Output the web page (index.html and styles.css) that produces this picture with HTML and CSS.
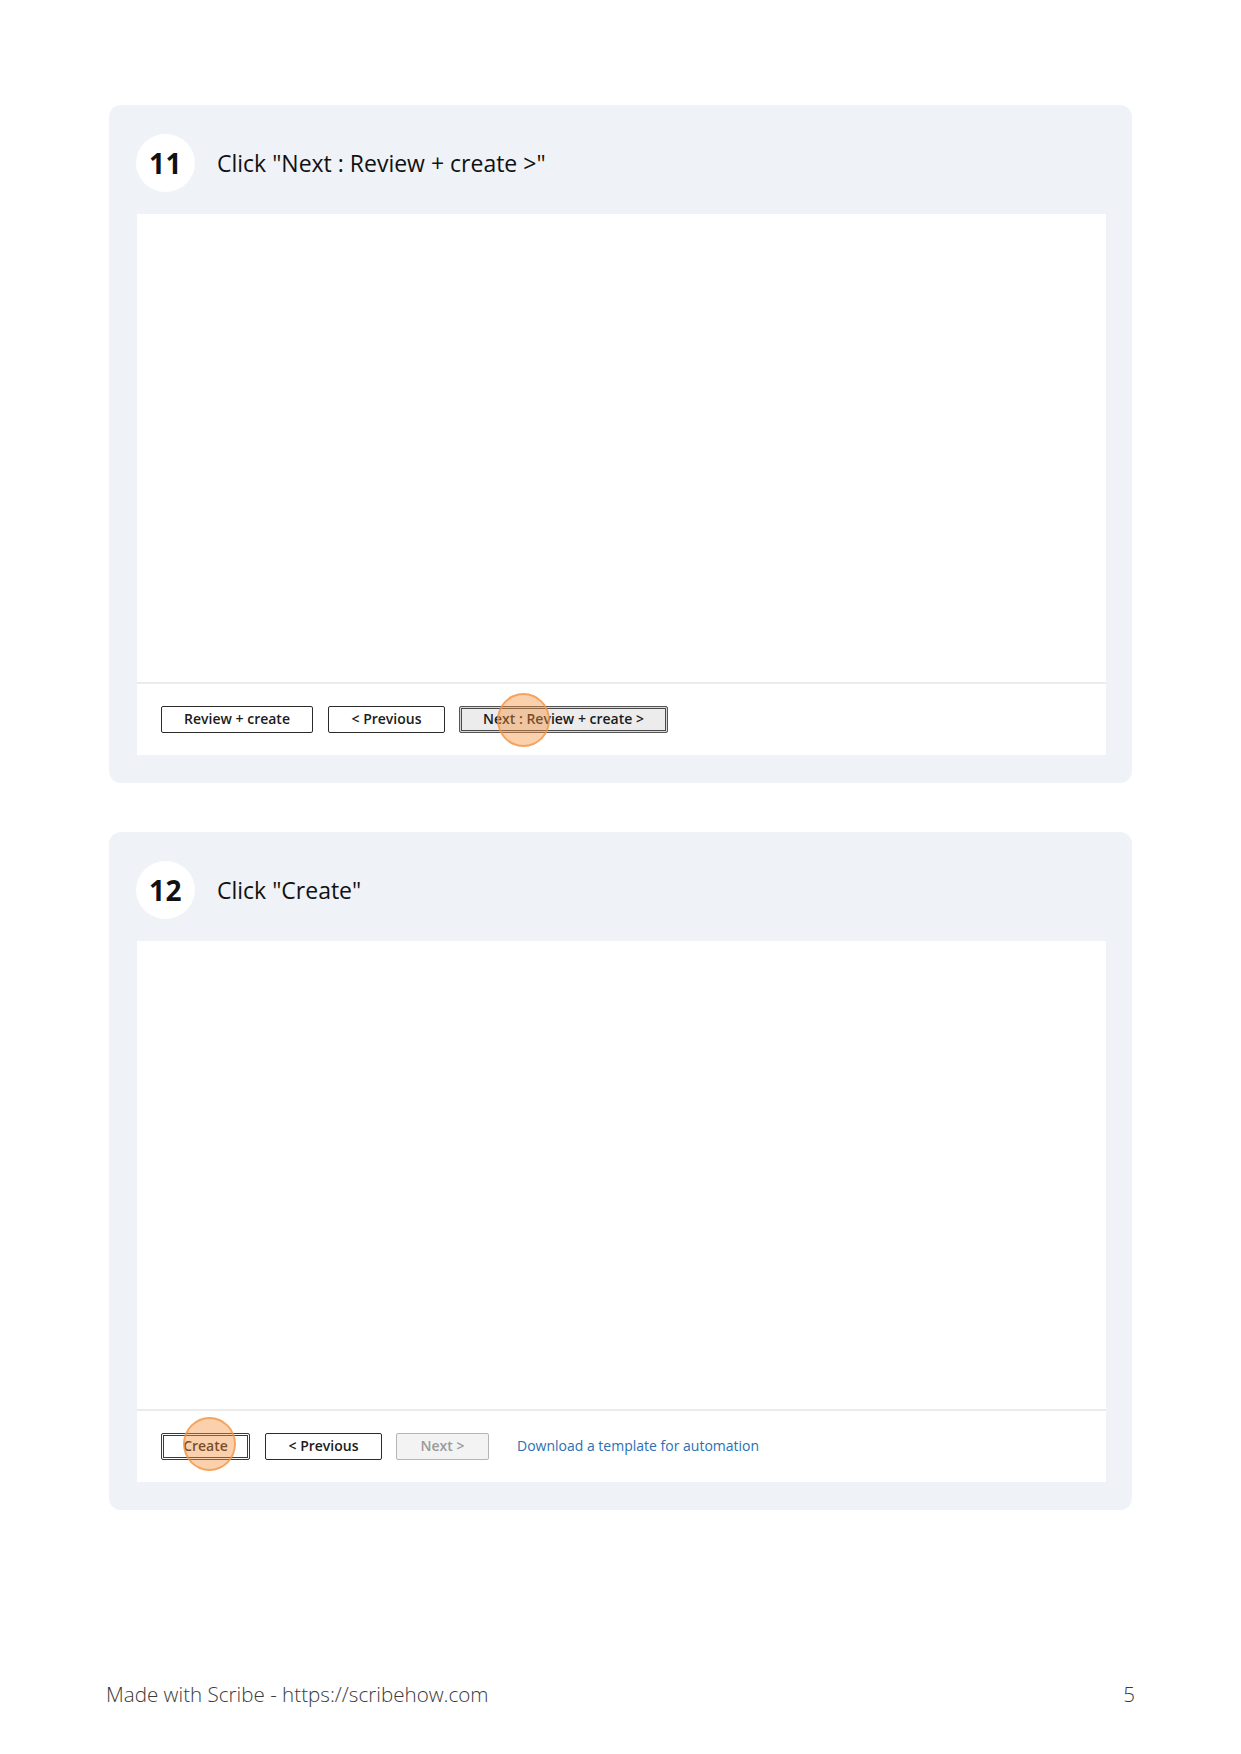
FILE: index.html
```html
<!DOCTYPE html>
<html lang="en">
<head>
<meta charset="utf-8">
<title>Made with Scribe</title>
<link rel="stylesheet" href="styles.css">
</head>
<body>
<main class="page">
  <section class="step">
    <header class="step-head">
      <div class="step-num">11</div>
      <h2 class="step-title">Click "Next : Review + create &gt;"</h2>
    </header>
    <div class="shot">
      <div class="shot-blank"></div>
      <div class="shot-bar">
        <button class="btn w152">Review + create</button>
        <button class="btn w117">&lt; Previous</button>
        <button class="btn btn-focus btn-grey w209">Next : Review + create &gt;<span class="click click-a"></span></button>
      </div>
    </div>
  </section>

  <section class="step">
    <header class="step-head">
      <div class="step-num">12</div>
      <h2 class="step-title">Click "Create"</h2>
    </header>
    <div class="shot">
      <div class="shot-blank"></div>
      <div class="shot-bar">
        <button class="btn btn-focus w89">Create<span class="click click-b"></span></button>
        <button class="btn w117">&lt; Previous</button>
        <button class="btn btn-disabled w93">Next &gt;</button>
        <span class="link">Download a template for automation</span>
      </div>
    </div>
  </section>
</main>
<footer class="foot">
  <span>Made with Scribe - https://scribehow.com</span>
  <span>5</span>
</footer>
</body>
</html>
```

FILE: styles.css
```css
* { box-sizing: border-box; }

html, body {
  margin: 0;
  padding: 0;
  background: #ffffff;
}

body {
  width: 1241px;
  height: 1754px;
  font-family: "Open Sans", "Noto Sans", sans-serif;
  color: #111111;
}

.page {
  padding-top: 105px;
  padding-left: 109px;
  display: flex;
  flex-direction: column;
  gap: 49px;
}

.step {
  width: 1023px;
  height: 678px;
  background: #eff2f7;
  border-radius: 12px;
  padding: 29px 26px 28px 28px;
  display: flex;
  flex-direction: column;
  gap: 22px;
}

.step-head {
  display: flex;
  align-items: center;
  gap: 22px;
  height: 58px;
  margin-left: -1px;
}

.step-num {
  width: 59px;
  height: 58px;
  border-radius: 50%;
  background: #ffffff;
  display: flex;
  align-items: center;
  justify-content: center;
  font-size: 28px;
  font-weight: 700;
  color: #111111;
  letter-spacing: 0.5px;
}

.step-title {
  margin: 0;
  font-size: 23px;
  font-weight: 400;
  color: #111111;
}

.shot {
  width: 969px;
  height: 541px;
  background: #ffffff;
  display: flex;
  flex-direction: column;
}

.shot-blank {
  flex: 1;
}

.shot-bar {
  height: 73px;
  border-top: 2px solid #ebebeb;
  padding: 22px 0 0 24px;
  display: flex;
  align-items: flex-start;
  gap: 14px;
}

.btn {
  position: relative;
  height: 27px;
  padding: 0 0 3px 0;
  margin: 0;
  background: #ffffff;
  border: 1px solid #2b2b2b;
  border-radius: 2px;
  font-family: "Open Sans", "Noto Sans", sans-serif;
  font-size: 14px;
  font-weight: 600;
  color: #1b1b1b;
  display: flex;
  align-items: center;
  justify-content: center;
}

.w152 { width: 152px; margin-right: 1px; }
.w117 { width: 117px; }
.w209 { width: 209px; }
.w89 { width: 89px; margin-right: 1px; }
.w93 { width: 93px; }

.btn-focus {
  border: 1px solid #3a3a3a;
  box-shadow: inset 0 0 0 1px #ffffff, inset 0 0 0 2px #3a3a3a;
}

.btn-grey {
  background: #ececec;
  border-color: #555555;
  box-shadow: inset 0 0 0 1px #d8d8d8, inset 0 0 0 2px #4a4a4a;
}

.btn-disabled {
  background: #f3f3f3;
  border-color: #b5b5b5;
  color: #9a9a9a;
}

.link {
  margin-left: 14px;
  height: 27px;
  padding-bottom: 3px;
  display: flex;
  align-items: center;
  font-size: 14px;
  font-weight: 400;
  color: #2a6fb3;
}

.click {
  position: absolute;
  width: 53px;
  height: 54px;
  border-radius: 50%;
  background: rgba(246, 146, 60, 0.42);
  border: 2px solid rgba(243, 150, 70, 0.75);
  pointer-events: none;
}

.click-a {
  left: 37px;
  top: -14px;
}

.click-b {
  left: 21px;
  top: -17px;
}

.foot {
  position: absolute;
  top: 1680px;
  left: 0;
  width: 1241px;
  padding: 0 106px;
  display: flex;
  justify-content: space-between;
  font-size: 20.6px;
  line-height: 28px;
  font-weight: 300;
  color: #3a3a3a;
}
```
